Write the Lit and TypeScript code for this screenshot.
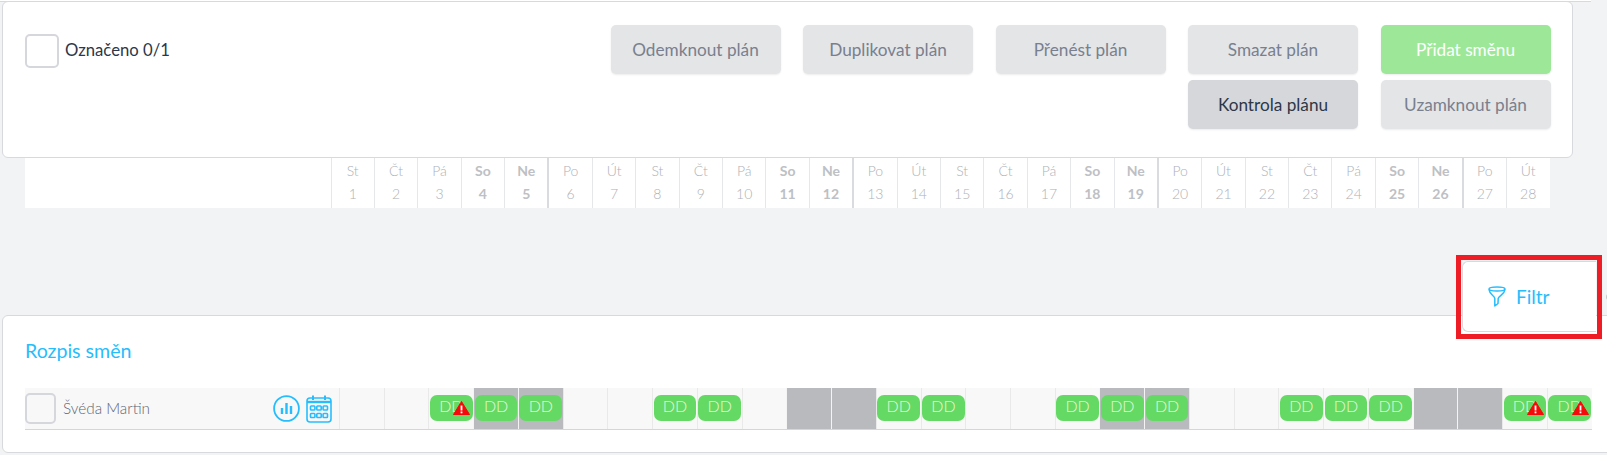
import { LitElement, css, html, nothing, svg } from 'lit';
import { customElement } from 'lit/decorators.js';

const dayNames = ['St', 'Čt', 'Pá', 'So', 'Ne', 'Po', 'Út'];
const days = Array.from({ length: 28 }, (_, i) => ({
  n: i + 1,
  name: dayNames[i % 7],
  weekend: i % 7 === 3 || i % 7 === 4,
  monday: i % 7 === 5,
}));

// shifts in the only row, some of them carry the warning triangle
const shifts = [3, 4, 5, 8, 9, 13, 14, 17, 18, 19, 22, 23, 24, 27, 28];
const warned = [3, 27, 28];

const warnIcon = svg`<svg class="warn" width="17" height="14" viewBox="0 0 17 14">
  <path d="M8.5 0.5 L16.5 13.5 L0.5 13.5 Z" fill="#f40a0a" stroke="#f40a0a" stroke-linejoin="round"/>
  <rect x="7.6" y="4.5" width="1.8" height="5" fill="#fff"/>
  <rect x="7.6" y="10.5" width="1.8" height="1.8" fill="#fff"/>
</svg>`;

@customElement('app-root')
export class AppRoot extends LitElement {
  static styles = css`
    :host {
      display: block;
      width: 1607px;
      height: 455px;
      overflow: hidden;
      background: #f2f3f5;
      font-family: 'Lato', 'Noto Sans', sans-serif;
      color: #2d3748;
    }
    .page {
      width: 1640px;
    }
    .top-line {
      width: 1591px;
      height: 1px;
      background: #fff;
      border-bottom: 1px solid #d8d9dc;
    }
    .top-card {
      position: relative;
      width: 1571px;
      height: 157px;
      margin: -1px 0 0 2px;
      box-sizing: border-box;
      background: #fff;
      border: 1px solid #d8d9dc;
      border-radius: 6px;
      display: flex;
      justify-content: space-between;
      padding: 23px 21.5px 0 22px;
    }
    .marked {
      display: flex;
      align-items: flex-start;
      gap: 6px;
      font-size: 16.7px;
      padding-top: 9px;
    }
    .marked span {
      line-height: 33px;
    }
    .box {
      box-sizing: border-box;
      border: 2px solid #d5d7dc;
      border-radius: 5px;
      background: #fff;
      width: 34px;
      height: 34px;
      flex: none;
    }
    .buttons {
      display: grid;
      grid-template-columns: repeat(5, 170px);
      grid-auto-rows: 49px;
      column-gap: 22.5px;
      row-gap: 6px;
    }
    .btn {
      display: flex;
      align-items: center;
      justify-content: center;
      border-radius: 5px;
      background: #e4e5e7;
      color: #78808f;
      font-size: 17.2px;
      box-shadow: 0 1px 2px rgba(0, 0, 0, 0.08);
    }
    .btn.green {
      background: #9ce898;
      color: #fff;
    }
    .btn.dark {
      background: #d6d7da;
      color: #2d3748;
    }
    .btn.r2 {
      grid-row: 2;
    }
    .btn.c4 {
      grid-column: 4;
    }
    .btn.c5 {
      grid-column: 5;
    }
    .calendar {
      display: flex;
      width: 1524.5px;
      height: 50px;
      margin-left: 25px;
      background: #fff;
    }
    .cal-head {
      width: 305.5px;
      flex: none;
    }
    .cal-day {
      flex: 1;
      box-sizing: border-box;
      border-left: 1px solid #e6e7e9;
      text-align: center;
      color: #aeb1b6;
      font-size: 14px;
      font-weight: 300;
      line-height: 23px;
      padding-top: 1px;
    }
    .cal-day div {
      height: 23px;
    }
    .cal-day.weekend {
      font-weight: 700;
      color: #bdc0c4;
    }
    .cal-day.monday {
      border-left: 2px solid #dadbde;
    }
    .filter-row {
      display: flex;
      align-items: center;
      padding: 53px 0 0 1462px;
      margin-bottom: -17px;
      position: relative;
      z-index: 1;
    }
    .filter {
      position: relative;
      width: 134px;
      height: 71px;
      box-sizing: border-box;
      background: #fff;
      border: 1px solid #d8d9dc;
      border-right: 0;
      border-radius: 6px 0 0 6px;
      display: flex;
      align-items: center;
      gap: 10px;
      padding-left: 25px;
      color: #27bdfd;
      font-size: 19px;
    }
    .filter .mark {
      position: absolute;
      left: -7px;
      top: -7px;
      width: 146px;
      height: 84px;
      box-sizing: border-box;
      border: 5.5px solid #ee1c25;
    }
    .next-card {
      width: 12px;
      height: 10px;
      margin-left: 10px;
      box-sizing: border-box;
      border: 1px solid #c6c7cb;
      border-radius: 50%;
    }
    .list-card {
      margin-left: 2px;
      height: 138px;
      box-sizing: border-box;
      background: #fff;
      border: 1px solid #d8d9dc;
      border-radius: 6px;
      padding: 20px 0 0 22px;
    }
    h2 {
      margin: 0;
      color: #27bdfd;
      font-size: 19.6px;
      font-weight: 400;
      line-height: 30px;
      height: 52px;
    }
    .row {
      display: flex;
      width: 1566.5px;
      height: 41px;
      background: #f8f8f8;
      border-bottom: 1.5px solid #d5d6d9;
    }
    .person {
      width: 314px;
      flex: none;
      display: flex;
      align-items: center;
      box-sizing: border-box;
      padding-right: 7px;
      color: #5c6573;
      font-size: 15.3px;
    }
    .person .box {
      width: 31px;
      height: 31px;
      background: #f8f8f8;
      margin-right: 7px;
    }
    .person .name {
      flex: 1;
      font-weight: 300;
      margin-top: -2px;
    }
    .person svg {
      margin-left: 6px;
    }
    .cell {
      flex: 1;
      position: relative;
      box-sizing: border-box;
      border-left: 1px solid #e9e9ea;
      padding: 7px 0 0;
    }
    .cell.off {
      background: #b8babd;
      border-left-color: #f4f4f4;
    }
    .shift {
      height: 26px;
      margin: 0 0.5px;
      border-radius: 7px;
      background: #64d964;
      color: #e4f8da;
      font-size: 16px;
      font-weight: 300;
      line-height: 22px;
      text-align: center;
    }
    .warn {
      position: absolute;
      right: 3px;
      top: 13px;
    }
  `;

  render() {
    return html`
      <div class="page">
        <div class="top-line"></div>
        <div class="top-card">
          <div class="marked">
            <div class="box"></div>
            <span>Označeno 0/1</span>
          </div>
          <div class="buttons">
            <div class="btn">Odemknout plán</div>
            <div class="btn">Duplikovat plán</div>
            <div class="btn">Přenést plán</div>
            <div class="btn">Smazat plán</div>
            <div class="btn green">Přidat směnu</div>
            <div class="btn dark r2 c4">Kontrola plánu</div>
            <div class="btn r2 c5">Uzamknout plán</div>
          </div>
        </div>
        <div class="calendar">
          <div class="cal-head"></div>
          ${days.map(
            d => html`
              <div class="cal-day ${d.weekend ? 'weekend' : ''} ${d.monday ? 'monday' : ''}">
                <div>${d.name}</div>
                <div>${d.n}</div>
              </div>
            `,
          )}
        </div>
        <div class="filter-row">
          <div class="filter">
            <svg width="18" height="21" viewBox="0 0 18 21" fill="none" stroke="#27bdfd" stroke-width="1.5" stroke-linejoin="round">
              <ellipse cx="9" cy="3" rx="8" ry="2" />
              <path d="M1 3.5 C1.5 8.5 6.5 9.5 6.8 12.5 L6.8 20 L10 17.5 L10.2 12.5 C10.8 9.5 16.5 8.5 17 3.5" />
            </svg>
            <span>Filtr</span>
            <div class="mark"></div>
          </div>
          <div class="next-card"></div>
        </div>
        <div class="list-card">
          <h2>Rozpis směn</h2>
          <div class="row">
            <div class="person">
              <div class="box"></div>
              <span class="name">Švéda Martin</span>
              <svg width="27" height="27" viewBox="0 0 27 27" fill="none" stroke="#27bdfd">
                <circle cx="13.5" cy="13.5" r="12.4" stroke-width="1.8" />
                <path d="M13.5 8 V19 M9 13 V19 M18 11 V19" stroke-width="2.4" />
              </svg>
              <svg width="26" height="28" viewBox="0 0 26 28" fill="none" stroke="#27bdfd" stroke-width="1.6">
                <rect x="1" y="3" width="24" height="24" rx="3" />
                <path d="M7 0.5 V5 M19 0.5 V5" stroke-width="2" />
                <path d="M1 7 H25" stroke-width="2.4" />
                <rect x="4.5" y="11" width="4.4" height="4" rx="0.8" />
                <rect x="10.8" y="11" width="4.4" height="4" rx="0.8" />
                <rect x="17.1" y="11" width="4.4" height="4" rx="0.8" />
                <rect x="4.5" y="18.5" width="4.4" height="4" rx="0.8" />
                <rect x="10.8" y="18.5" width="4.4" height="4" rx="0.8" />
                <rect x="17.1" y="18.5" width="4.4" height="4" rx="0.8" />
              </svg>
            </div>
            ${days.map(
              d => html`
                <div class="cell ${d.weekend ? 'off' : ''}">
                  ${shifts.includes(d.n) ? html`<div class="shift">DD</div>` : nothing}
                  ${warned.includes(d.n) ? warnIcon : nothing}
                </div>
              `,
            )}
          </div>
        </div>
      </div>
    `;
  }
}
